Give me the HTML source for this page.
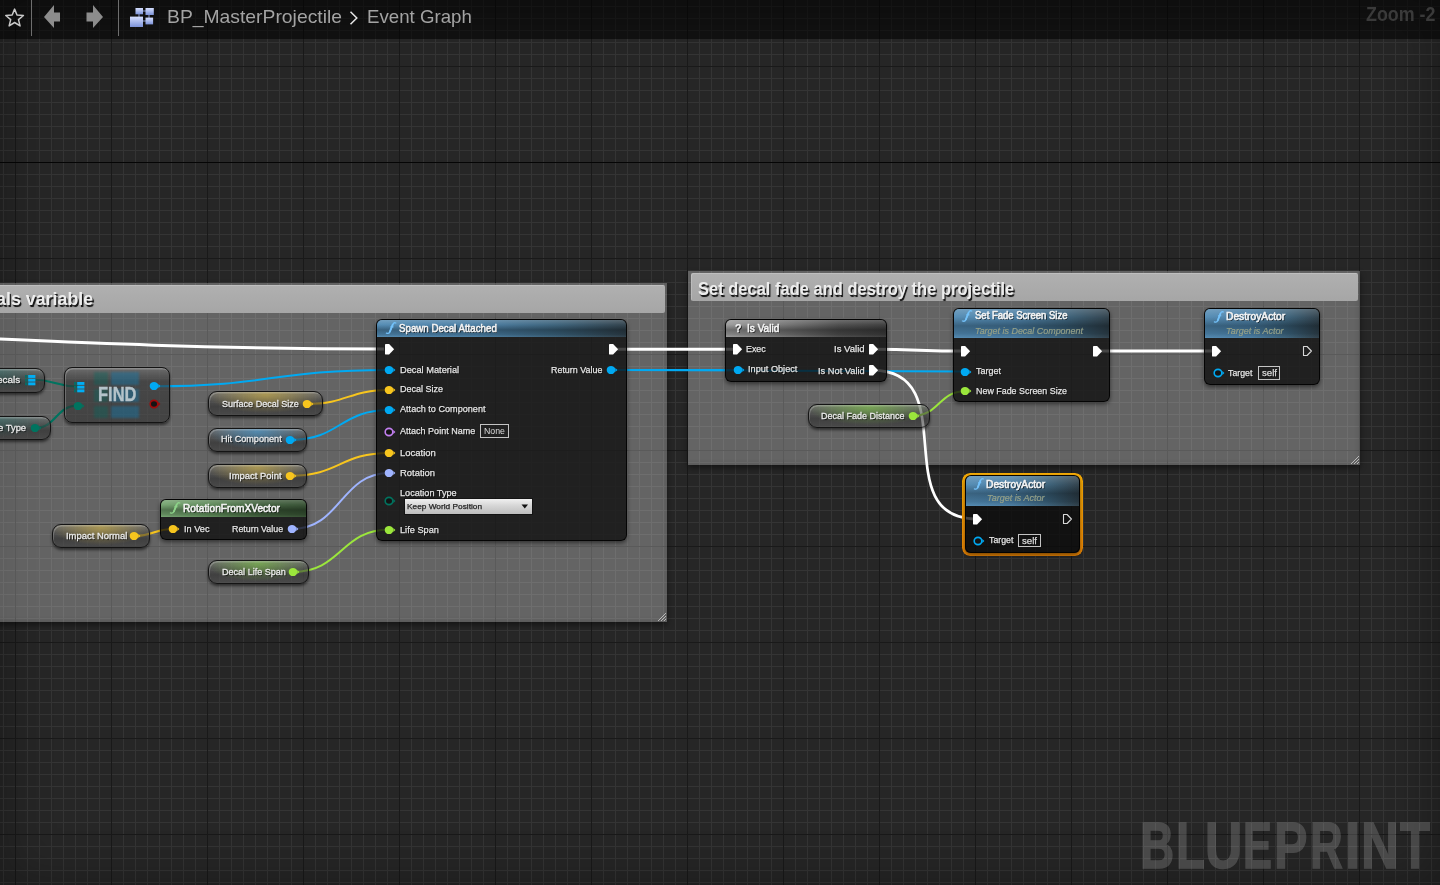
<!DOCTYPE html><html><head><meta charset="utf-8"><style>
*{margin:0;padding:0;box-sizing:border-box}
html,body{width:1440px;height:885px;overflow:hidden;background:#262626}
body{position:relative;font-family:"Liberation Sans",sans-serif}
.t{position:absolute;white-space:nowrap;line-height:1;transform-origin:0 0}
.grid{position:absolute;left:0;top:0;width:1440px;height:885px;
background-color:#262626;
background-image:
 linear-gradient(to bottom, transparent 162px, #050505 162px, #050505 163px, transparent 163px),
 linear-gradient(to right, #191919 1px, transparent 1px),
 linear-gradient(to bottom, #191919 1px, transparent 1px),
 linear-gradient(to right, #343434 1px, transparent 1px),
 linear-gradient(to bottom, #343434 1px, transparent 1px);
background-size: 1440px 885px, 96px 96px, 96px 96px, 12px 12px, 12px 12px;
background-position: 0 0, 15px 0, 0 66px, 3px 0, 0 6px;
}
.vig{position:absolute;left:0;top:0;width:1440px;height:885px;box-shadow:inset 0 0 50px 2px rgba(0,0,0,0.32)}
.cmt{background:rgba(255,255,255,0.285);box-shadow:inset -2px -2px 4px rgba(0,0,0,0.10),0 3px 6px rgba(0,0,0,0.45)}
.cmth{background:linear-gradient(180deg,#b0b0b0 0%,#a6a6a6 100%);border-radius:2px;box-shadow:inset 1px 1px 0 rgba(255,255,255,0.2)}
.ct{text-shadow:1.4px 1.6px 0.8px rgba(0,0,0,0.9)}
.node{border-radius:6px;background:rgba(10,11,10,0.76);border:1px solid rgba(0,0,0,0.85);box-shadow:0 2px 4px rgba(0,0,0,0.5);overflow:hidden}
.hdr{position:absolute;left:0;top:0;right:0}
.fh{background:linear-gradient(180deg,rgba(255,255,255,0.20) 0%,rgba(255,255,255,0.04) 28%,rgba(0,0,0,0.28) 58%,rgba(0,0,0,0.14) 85%,rgba(255,255,255,0.03) 100%),linear-gradient(90deg,#5089b2 0%,#487ca2 40%,#385f78 72%,#2c3d48 100%)}
.gh{background:linear-gradient(180deg,rgba(255,255,255,0.20) 0%,rgba(255,255,255,0.04) 28%,rgba(0,0,0,0.28) 58%,rgba(0,0,0,0.14) 85%,rgba(255,255,255,0.03) 100%),linear-gradient(90deg,#74a36f 0%,#5a8655 35%,#3d5c39 70%,#344f31 100%)}
.vh{background:linear-gradient(180deg,rgba(255,255,255,0.20) 0%,rgba(255,255,255,0.04) 28%,rgba(0,0,0,0.28) 58%,rgba(0,0,0,0.14) 85%,rgba(255,255,255,0.03) 100%),linear-gradient(90deg,#9a9a9a 0%,#7a7a7a 30%,#4a4a4a 70%,#3a3a3a 100%)}
.pill{border-radius:9px;border:1px solid #141414;box-shadow:0 2px 3px rgba(0,0,0,0.5);overflow:hidden}
.pt{text-shadow:1px 1px 1px rgba(0,0,0,0.85);-webkit-text-stroke:0.3px #ececec}
.tt{text-shadow:1px 1px 0.5px rgba(0,0,0,0.7);-webkit-text-stroke:0.6px currentColor}
.lt{text-shadow:1px 1px 0.5px rgba(0,0,0,0.7);-webkit-text-stroke:0.25px currentColor}
</style></head><body>
<div class="grid"></div>
<div class="vig"></div>
<div class="cmt" style="position:absolute;left:-10.00px;top:283.00px;width:677.00px;height:339.00px;"></div>
<div class="cmth" style="position:absolute;left:-10.00px;top:285.00px;width:675.00px;height:27.60px;"></div>
<div class="t ct" style="left:-4.02px;top:290.30px;font-size:18.31px;color:#ededed;font-weight:bold;transform:scaleX(0.9755);">als variable</div>
<div class="cmt" style="position:absolute;left:688.00px;top:271.00px;width:672.00px;height:194.40px;"></div>
<div class="cmth" style="position:absolute;left:691.00px;top:273.00px;width:667.00px;height:28.00px;"></div>
<div class="t ct" style="left:698.42px;top:279.57px;font-size:18.46px;color:#ededed;font-weight:bold;transform:scaleX(0.8947);">Set decal fade and destroy the projectile</div>
<svg style="position:absolute;left:655.00px;top:610.00px;overflow:visible" width="12" height="12"><path d="M11,3 L3,11 M11,6 L6,11 M11,9 L9,11" stroke="#cfcfcf" stroke-width="0.8"/></svg>
<svg style="position:absolute;left:1348.00px;top:453.40px;overflow:visible" width="12" height="12"><path d="M11,3 L3,11 M11,6 L6,11 M11,9 L9,11" stroke="#cfcfcf" stroke-width="0.8"/></svg>
<svg style="position:absolute;left:0.00px;top:0.00px;overflow:visible" width="1440" height="885"><path d="M-300,326 C0,338 150,349 384,349" stroke="#fff" stroke-width="3" fill="none"/><path d="M613.0,349.2 C675.0,349.2 675.0,349.2 737.0,349.2" stroke="#ffffff" stroke-width="3" fill="none"/><path d="M611.0,369.9 C674.2,369.9 674.2,369.9 737.5,369.9" stroke="#00a9f2" stroke-width="2" fill="none"/><path d="M611.0,369.9 C788.0,369.9 788.0,371.5 965.0,371.5" stroke="#00a9f2" stroke-width="2" fill="none"/><path d="M873.0,349.2 C919.0,349.2 919.0,351.1 965.0,351.1" stroke="#ffffff" stroke-width="3" fill="none"/><path d="M1097.0,351.0 C1157.0,351.0 1157.0,351.0 1217.0,351.0" stroke="#ffffff" stroke-width="3" fill="none"/><path d="M873.0,370.4 C965.0,370.4 885.0,519.0 977.0,519.0" stroke="#ffffff" stroke-width="2.7" fill="none"/><path d="M913.1,415.8 C939.0,415.8 939.0,391.3 965.0,391.3" stroke="#9be63c" stroke-width="2" fill="none"/><path d="M154.0,386.2 C271.6,386.2 271.6,370.0 389.3,370.0" stroke="#00a9f2" stroke-width="2" fill="none"/><path d="M307.0,403.8 C348.1,403.8 348.1,390.0 389.3,390.0" stroke="#f7c51e" stroke-width="2" fill="none"/><path d="M290.3,440.0 C339.8,440.0 339.8,410.0 389.3,410.0" stroke="#00a9f2" stroke-width="2" fill="none"/><path d="M290.3,475.8 C339.8,475.8 339.8,453.0 389.3,453.0" stroke="#f7c51e" stroke-width="2" fill="none"/><path d="M292.2,528.9 C340.8,528.9 340.8,473.0 389.3,473.0" stroke="#9fb4ff" stroke-width="2" fill="none"/><path d="M293.1,572.0 C341.2,572.0 341.2,529.6 389.3,529.6" stroke="#9be63c" stroke-width="2" fill="none"/><path d="M134.0,536.0 C154.0,536.0 153.3,528.9 173.3,528.9" stroke="#f7c51e" stroke-width="2" fill="none"/><path d="M32.0,379.5 C55.0,379.5 55.0,386.5 78.0,386.5" stroke="#00735f" stroke-width="2.2" fill="none"/><path d="M35.0,428.0 C56.2,428.0 56.2,405.6 77.5,405.6" stroke="#00735f" stroke-width="2.2" fill="none"/></svg>
<div class="pill" style="position:absolute;left:-60.00px;top:367.75px;width:105.00px;height:25.00px;border-radius:9px;background:radial-gradient(ellipse 52% 80% at 50% 12%, rgba(0,120,110,0.3) 0%, rgba(0,0,0,0) 100%),linear-gradient(180deg,rgba(120,120,120,0.72) 0%,rgba(72,72,72,0.6) 32%,rgba(36,36,36,0.56) 62%,rgba(48,48,48,0.52) 100%);box-shadow:inset 1px 1.5px 0 rgba(255,255,255,0.2),0 2px 3px rgba(0,0,0,0.55)"></div>
<div class="t pt" style="left:-3.42px;top:375.08px;font-size:9.88px;color:#e8e8e8;transform:scaleX(1.0047);">ecals</div>
<svg style="position:absolute;left:25.00px;top:374.75px;overflow:visible" width="12" height="12"><rect x="0" y="0" width="2.6" height="2.9" fill="#0a6a64"/><rect x="0" y="3.7" width="2.6" height="2.9" fill="#0a6a64"/><rect x="0" y="7.4" width="2.6" height="2.9" fill="#0a6a64"/><rect x="3.2" y="0" width="7.2" height="2.9" fill="#00aef5"/><rect x="3.2" y="3.7" width="7.2" height="2.9" fill="#00aef5"/><rect x="3.2" y="7.4" width="7.2" height="2.9" fill="#00aef5"/></svg>
<div class="pill" style="position:absolute;left:-70.00px;top:415.60px;width:121.25px;height:24.40px;border-radius:9px;background:radial-gradient(ellipse 52% 80% at 50% 12%, rgba(0,120,110,0.3) 0%, rgba(0,0,0,0) 100%),linear-gradient(180deg,rgba(120,120,120,0.72) 0%,rgba(72,72,72,0.6) 32%,rgba(36,36,36,0.56) 62%,rgba(48,48,48,0.52) 100%);box-shadow:inset 1px 1.5px 0 rgba(255,255,255,0.2),0 2px 3px rgba(0,0,0,0.55)"></div>
<div class="t pt" style="left:-2.40px;top:422.63px;font-size:9.88px;color:#e8e8e8;transform:scaleX(0.9538);">e Type</div>
<svg style="position:absolute;left:27.00px;top:419.80px;overflow:visible" width="16" height="16"><ellipse cx="8" cy="8" rx="4.3" ry="4.1" fill="#00735f"/><path d="M12.3,6.1 L14.4,8 L12.3,9.9Z" fill="#00735f"/></svg>
<div class="pill" style="position:absolute;left:208.30px;top:391.30px;width:115.20px;height:24.80px;border-radius:9px;background:radial-gradient(ellipse 52% 80% at 50% 12%, rgba(210,180,70,0.6) 0%, rgba(0,0,0,0) 100%),linear-gradient(180deg,rgba(120,120,120,0.72) 0%,rgba(72,72,72,0.6) 32%,rgba(36,36,36,0.56) 62%,rgba(48,48,48,0.52) 100%);box-shadow:inset 1px 1.5px 0 rgba(255,255,255,0.2),0 2px 3px rgba(0,0,0,0.55)"></div>
<div class="t pt" style="left:221.69px;top:398.53px;font-size:9.88px;color:#e8e8e8;transform:scaleX(0.9151);">Surface Decal Size</div>
<svg style="position:absolute;left:299.00px;top:395.70px;overflow:visible" width="16" height="16"><ellipse cx="8" cy="8" rx="4.3" ry="4.1" fill="#f7c51e"/><path d="M12.3,6.1 L14.4,8 L12.3,9.9Z" fill="#f7c51e"/></svg>
<div class="pill" style="position:absolute;left:208.30px;top:427.50px;width:98.40px;height:24.20px;border-radius:9px;background:radial-gradient(ellipse 52% 80% at 50% 12%, rgba(70,160,220,0.6) 0%, rgba(0,0,0,0) 100%),linear-gradient(180deg,rgba(120,120,120,0.72) 0%,rgba(72,72,72,0.6) 32%,rgba(36,36,36,0.56) 62%,rgba(48,48,48,0.52) 100%);box-shadow:inset 1px 1.5px 0 rgba(255,255,255,0.2),0 2px 3px rgba(0,0,0,0.55)"></div>
<div class="t pt" style="left:221.35px;top:434.43px;font-size:9.88px;color:#e8e8e8;transform:scaleX(0.9210);">Hit Component</div>
<svg style="position:absolute;left:282.30px;top:431.60px;overflow:visible" width="16" height="16"><ellipse cx="8" cy="8" rx="4.3" ry="4.1" fill="#00a9f2"/><path d="M12.3,6.1 L14.4,8 L12.3,9.9Z" fill="#00a9f2"/></svg>
<div class="pill" style="position:absolute;left:208.30px;top:463.70px;width:98.40px;height:24.00px;border-radius:9px;background:radial-gradient(ellipse 52% 80% at 50% 12%, rgba(210,180,70,0.6) 0%, rgba(0,0,0,0) 100%),linear-gradient(180deg,rgba(120,120,120,0.72) 0%,rgba(72,72,72,0.6) 32%,rgba(36,36,36,0.56) 62%,rgba(48,48,48,0.52) 100%);box-shadow:inset 1px 1.5px 0 rgba(255,255,255,0.2),0 2px 3px rgba(0,0,0,0.55)"></div>
<div class="t pt" style="left:229.43px;top:470.53px;font-size:9.88px;color:#e8e8e8;transform:scaleX(0.9583);">Impact Point</div>
<svg style="position:absolute;left:282.30px;top:467.70px;overflow:visible" width="16" height="16"><ellipse cx="8" cy="8" rx="4.3" ry="4.1" fill="#f7c51e"/><path d="M12.3,6.1 L14.4,8 L12.3,9.9Z" fill="#f7c51e"/></svg>
<div class="pill" style="position:absolute;left:52.30px;top:523.80px;width:98.00px;height:24.10px;border-radius:9px;background:radial-gradient(ellipse 52% 80% at 50% 12%, rgba(210,180,70,0.6) 0%, rgba(0,0,0,0) 100%),linear-gradient(180deg,rgba(120,120,120,0.72) 0%,rgba(72,72,72,0.6) 32%,rgba(36,36,36,0.56) 62%,rgba(48,48,48,0.52) 100%);box-shadow:inset 1px 1.5px 0 rgba(255,255,255,0.2),0 2px 3px rgba(0,0,0,0.55)"></div>
<div class="t pt" style="left:65.53px;top:530.68px;font-size:9.88px;color:#e8e8e8;transform:scaleX(0.9540);">Impact Normal</div>
<svg style="position:absolute;left:126.00px;top:527.85px;overflow:visible" width="16" height="16"><ellipse cx="8" cy="8" rx="4.3" ry="4.1" fill="#f7c51e"/><path d="M12.3,6.1 L14.4,8 L12.3,9.9Z" fill="#f7c51e"/></svg>
<div class="pill" style="position:absolute;left:208.40px;top:559.70px;width:100.80px;height:24.30px;border-radius:9px;background:radial-gradient(ellipse 52% 80% at 50% 12%, rgba(130,210,70,0.55) 0%, rgba(0,0,0,0) 100%),linear-gradient(180deg,rgba(120,120,120,0.72) 0%,rgba(72,72,72,0.6) 32%,rgba(36,36,36,0.56) 62%,rgba(48,48,48,0.52) 100%);box-shadow:inset 1px 1.5px 0 rgba(255,255,255,0.2),0 2px 3px rgba(0,0,0,0.55)"></div>
<div class="t pt" style="left:221.56px;top:566.68px;font-size:9.88px;color:#e8e8e8;transform:scaleX(0.9162);">Decal Life Span</div>
<svg style="position:absolute;left:285.10px;top:563.85px;overflow:visible" width="16" height="16"><ellipse cx="8" cy="8" rx="4.3" ry="4.1" fill="#9be63c"/><path d="M12.3,6.1 L14.4,8 L12.3,9.9Z" fill="#9be63c"/></svg>
<div class="pill" style="position:absolute;left:808.30px;top:403.75px;width:121.50px;height:23.95px;border-radius:9px;background:radial-gradient(ellipse 52% 80% at 50% 12%, rgba(130,210,70,0.55) 0%, rgba(0,0,0,0) 100%),linear-gradient(180deg,rgba(120,120,120,0.72) 0%,rgba(72,72,72,0.6) 32%,rgba(36,36,36,0.56) 62%,rgba(48,48,48,0.52) 100%);box-shadow:inset 1px 1.5px 0 rgba(255,255,255,0.2),0 2px 3px rgba(0,0,0,0.55)"></div>
<div class="t pt" style="left:821.26px;top:410.56px;font-size:9.88px;color:#e8e8e8;transform:scaleX(0.9106);">Decal Fade Distance</div>
<svg style="position:absolute;left:905.10px;top:407.73px;overflow:visible" width="16" height="16"><ellipse cx="8" cy="8" rx="4.3" ry="4.1" fill="#9be63c"/><path d="M12.3,6.1 L14.4,8 L12.3,9.9Z" fill="#9be63c"/></svg>
<div class="pill" style="position:absolute;left:64.40px;top:367.20px;width:105.20px;height:56.10px;border-radius:8px;background:linear-gradient(180deg,rgba(110,110,110,0.75) 0%,rgba(50,50,50,0.6) 25%,rgba(40,40,40,0.55) 100%);box-shadow:inset 1px 1.5px 0 rgba(255,255,255,0.22),0 2px 3px rgba(0,0,0,0.55)"></div>
<div style="position:absolute;left:94.00px;top:372.00px;width:13.50px;height:46.00px;background:repeating-linear-gradient(180deg,rgba(0,110,100,0.35) 0 13px,transparent 13px 17px);filter:blur(1.2px)"></div>
<div style="position:absolute;left:110.60px;top:372.00px;width:28.80px;height:46.00px;background:repeating-linear-gradient(180deg,rgba(20,120,170,0.45) 0 13px,transparent 13px 17px);filter:blur(1.2px)"></div>
<div class="t" style="left:97.80px;top:384.33px;font-size:20.64px;color:#b4c3ca;font-weight:bold;transform:scaleX(0.7995);-webkit-text-stroke:0.35px currentColor">FIND</div>
<svg style="position:absolute;left:73.75px;top:381.90px;overflow:visible" width="12" height="12"><rect x="0" y="0" width="2.6" height="2.9" fill="#0a6a64"/><rect x="0" y="3.7" width="2.6" height="2.9" fill="#0a6a64"/><rect x="0" y="7.4" width="2.6" height="2.9" fill="#0a6a64"/><rect x="3.2" y="0" width="7.2" height="2.9" fill="#00aef5"/><rect x="3.2" y="3.7" width="7.2" height="2.9" fill="#00aef5"/><rect x="3.2" y="7.4" width="7.2" height="2.9" fill="#00aef5"/></svg>
<svg style="position:absolute;left:69.50px;top:397.60px;overflow:visible" width="16" height="16"><ellipse cx="8" cy="8" rx="4.3" ry="4.1" fill="#00735f"/><path d="M12.3,6.1 L14.4,8 L12.3,9.9Z" fill="#00735f"/></svg>
<svg style="position:absolute;left:146.00px;top:378.25px;overflow:visible" width="16" height="16"><ellipse cx="8" cy="8" rx="4.3" ry="4.1" fill="#00a9f2"/><path d="M12.3,6.1 L14.4,8 L12.3,9.9Z" fill="#00a9f2"/></svg>
<svg style="position:absolute;left:146.00px;top:395.75px;overflow:visible" width="16" height="16"><ellipse cx="8" cy="8" rx="3.8000000000000003" ry="3.6" fill="#141414" stroke="#a00a0a" stroke-width="1.6"/><path d="M12.3,6.1 L14.4,8 L12.3,9.9Z" fill="#a00a0a"/></svg>
<div class="node" style="position:absolute;left:376.10px;top:319.00px;width:250.50px;height:222.30px;"><div class="hdr fh" style="height:17.00px"></div></div>
<svg style="position:absolute;left:386.00px;top:322.00px;overflow:visible" width="10" height="12"><g transform="scale(1.000,1.000)"><path d="M9.8,1.0 C8.6,0.5 7.4,0.8 6.8,2.4 L3.8,10.0 C3.2,11.5 1.9,11.7 0.4,11.2" fill="none" stroke="#74c2fa" stroke-width="1.3" stroke-linecap="round"/><path d="M6.9,2.2 L3.7,10.2" stroke="#74c2fa" stroke-width="1.8"/><path d="M4.2,4.9 L7.6,4.9" stroke="#74c2fa" stroke-width="1.0"/></g></svg>
<div class="t tt" style="left:398.56px;top:322.26px;font-size:11.63px;color:#f4f4f4;transform:scaleX(0.8362);">Spawn Decal Attached</div>
<svg style="position:absolute;left:383.80px;top:343.00px;overflow:visible" width="12" height="13"><path d="M1.4,1 L5.1,1 L10.1,6.2 L5.1,11.4 L1.4,11.4 Q1,11.4 1,11 L1,1.4 Q1,1 1.4,1Z" fill="#fff"/></svg>
<svg style="position:absolute;left:607.90px;top:343.00px;overflow:visible" width="12" height="13"><path d="M1.4,1 L5.1,1 L10.1,6.2 L5.1,11.4 L1.4,11.4 Q1,11.4 1,11 L1,1.4 Q1,1 1.4,1Z" fill="#fff"/></svg>
<svg style="position:absolute;left:381.40px;top:362.00px;overflow:visible" width="16" height="16"><ellipse cx="8" cy="8" rx="4.3" ry="4.1" fill="#00a9f2"/><path d="M12.3,6.1 L14.4,8 L12.3,9.9Z" fill="#00a9f2"/></svg>
<div class="t lt" style="left:399.54px;top:364.73px;font-size:9.88px;color:#e6e6e6;transform:scaleX(0.9369);">Decal Material</div>
<svg style="position:absolute;left:381.40px;top:382.10px;overflow:visible" width="16" height="16"><ellipse cx="8" cy="8" rx="4.3" ry="4.1" fill="#f7c51e"/><path d="M12.3,6.1 L14.4,8 L12.3,9.9Z" fill="#f7c51e"/></svg>
<div class="t lt" style="left:399.56px;top:384.33px;font-size:9.88px;color:#e6e6e6;transform:scaleX(0.9110);">Decal Size</div>
<svg style="position:absolute;left:381.40px;top:402.00px;overflow:visible" width="16" height="16"><ellipse cx="8" cy="8" rx="4.3" ry="4.1" fill="#00a9f2"/><path d="M12.3,6.1 L14.4,8 L12.3,9.9Z" fill="#00a9f2"/></svg>
<div class="t lt" style="left:400.28px;top:404.03px;font-size:9.88px;color:#e6e6e6;transform:scaleX(0.9217);">Attach to Component</div>
<svg style="position:absolute;left:381.40px;top:423.60px;overflow:visible" width="16" height="16"><ellipse cx="8" cy="8" rx="3.8000000000000003" ry="3.6" fill="#141414" stroke="#c27ff0" stroke-width="1.6"/><path d="M12.3,6.1 L14.4,8 L12.3,9.9Z" fill="#c27ff0"/></svg>
<div class="t lt" style="left:400.28px;top:426.13px;font-size:9.88px;color:#e6e6e6;transform:scaleX(0.9140);">Attach Point Name</div>
<svg style="position:absolute;left:381.40px;top:445.10px;overflow:visible" width="16" height="16"><ellipse cx="8" cy="8" rx="4.3" ry="4.1" fill="#f7c51e"/><path d="M12.3,6.1 L14.4,8 L12.3,9.9Z" fill="#f7c51e"/></svg>
<div class="t lt" style="left:399.52px;top:447.63px;font-size:9.88px;color:#e6e6e6;transform:scaleX(0.9606);">Location</div>
<svg style="position:absolute;left:381.40px;top:464.80px;overflow:visible" width="16" height="16"><ellipse cx="8" cy="8" rx="4.3" ry="4.1" fill="#9fb4ff"/><path d="M12.3,6.1 L14.4,8 L12.3,9.9Z" fill="#9fb4ff"/></svg>
<div class="t lt" style="left:399.53px;top:467.53px;font-size:9.88px;color:#e6e6e6;transform:scaleX(0.9530);">Rotation</div>
<svg style="position:absolute;left:381.40px;top:521.60px;overflow:visible" width="16" height="16"><ellipse cx="8" cy="8" rx="4.3" ry="4.1" fill="#9be63c"/><path d="M12.3,6.1 L14.4,8 L12.3,9.9Z" fill="#9be63c"/></svg>
<div class="t lt" style="left:399.54px;top:524.53px;font-size:9.88px;color:#e6e6e6;transform:scaleX(0.9327);">Life Span</div>
<svg style="position:absolute;left:381.40px;top:493.00px;overflow:visible" width="16" height="16"><ellipse cx="8" cy="8" rx="3.8000000000000003" ry="3.6" fill="#141414" stroke="#00735f" stroke-width="1.6"/><path d="M12.3,6.1 L14.4,8 L12.3,9.9Z" fill="#00735f"/></svg>
<div class="t lt" style="left:399.65px;top:487.53px;font-size:9.88px;color:#e6e6e6;transform:scaleX(0.9238);">Location Type</div>
<div style="position:absolute;left:479.90px;top:424.00px;width:28.90px;height:13.70px;border:1px solid #c4c4c4"></div>
<div class="t" style="left:483.68px;top:426.18px;font-size:9.59px;color:#dcdcdc;transform:scaleX(0.9162);">None</div>
<div style="position:absolute;left:404.90px;top:499.00px;width:127.30px;height:15.00px;background:linear-gradient(180deg,#f0f0f0 0%,#d6d6d6 45%,#bdbdbd 100%);box-shadow:0 0 0 1px rgba(0,0,0,0.4)"></div>
<div class="t" style="left:407.32px;top:502.63px;font-size:7.41px;color:#262626;transform:scaleX(1.1200);-webkit-text-stroke:0.25px #262626">Keep World Position</div>
<svg style="position:absolute;left:521.00px;top:504.00px;overflow:visible" width="8" height="6"><path d="M0.5,0.5 L7,0.5 L3.75,4.5Z" fill="#111"/></svg>
<div class="t lt" style="left:550.52px;top:364.63px;font-size:9.88px;color:#e6e6e6;transform:scaleX(0.9027);">Return Value</div>
<svg style="position:absolute;left:603.00px;top:361.90px;overflow:visible" width="16" height="16"><ellipse cx="8" cy="8" rx="4.3" ry="4.1" fill="#00a9f2"/><path d="M12.3,6.1 L14.4,8 L12.3,9.9Z" fill="#00a9f2"/></svg>
<div class="node" style="position:absolute;left:160.30px;top:499.40px;width:147.10px;height:40.90px;"><div class="hdr gh" style="height:16.60px"></div></div>
<svg style="position:absolute;left:170.00px;top:502.20px;overflow:visible" width="10" height="11.7"><g transform="scale(1.000,0.975)"><path d="M9.8,1.0 C8.6,0.5 7.4,0.8 6.8,2.4 L3.8,10.0 C3.2,11.5 1.9,11.7 0.4,11.2" fill="none" stroke="#8ed48a" stroke-width="1.3" stroke-linecap="round"/><path d="M6.9,2.2 L3.7,10.2" stroke="#8ed48a" stroke-width="1.8"/><path d="M4.2,4.9 L7.6,4.9" stroke="#8ed48a" stroke-width="1.0"/></g></svg>
<div class="t tt" style="left:182.87px;top:502.68px;font-size:11.48px;color:#f4f4f4;transform:scaleX(0.8841);">RotationFromXVector</div>
<svg style="position:absolute;left:165.30px;top:520.90px;overflow:visible" width="16" height="16"><ellipse cx="8" cy="8" rx="4.3" ry="4.1" fill="#f7c51e"/><path d="M12.3,6.1 L14.4,8 L12.3,9.9Z" fill="#f7c51e"/></svg>
<div class="t lt" style="left:183.55px;top:523.53px;font-size:9.88px;color:#e6e6e6;transform:scaleX(0.9312);">In Vec</div>
<div class="t lt" style="left:231.87px;top:523.53px;font-size:9.88px;color:#e6e6e6;transform:scaleX(0.8983);">Return Value</div>
<svg style="position:absolute;left:284.20px;top:520.90px;overflow:visible" width="16" height="16"><ellipse cx="8" cy="8" rx="4.3" ry="4.1" fill="#9fb4ff"/><path d="M12.3,6.1 L14.4,8 L12.3,9.9Z" fill="#9fb4ff"/></svg>
<div class="node" style="position:absolute;left:725.00px;top:319.40px;width:161.60px;height:62.80px;"><div class="hdr vh" style="height:16.50px"></div></div>
<div class="t lt" style="left:734.61px;top:322.53px;font-size:11.19px;color:#f2f2f2;font-weight:bold;transform:scaleX(0.9511);">?</div>
<div class="t tt" style="left:746.87px;top:322.73px;font-size:11.19px;color:#f4f4f4;transform:scaleX(0.9014);">Is Valid</div>
<svg style="position:absolute;left:732.00px;top:343.00px;overflow:visible" width="12" height="13"><path d="M1.4,1 L5.1,1 L10.1,6.2 L5.1,11.4 L1.4,11.4 Q1,11.4 1,11 L1,1.4 Q1,1 1.4,1Z" fill="#fff"/></svg>
<div class="t lt" style="left:745.77px;top:344.46px;font-size:9.74px;color:#e6e6e6;transform:scaleX(0.9129);">Exec</div>
<div class="t lt" style="left:834.32px;top:344.46px;font-size:9.74px;color:#e6e6e6;transform:scaleX(0.9800);">Is Valid</div>
<svg style="position:absolute;left:867.90px;top:343.00px;overflow:visible" width="12" height="13"><path d="M1.4,1 L5.1,1 L10.1,6.2 L5.1,11.4 L1.4,11.4 Q1,11.4 1,11 L1,1.4 Q1,1 1.4,1Z" fill="#fff"/></svg>
<svg style="position:absolute;left:729.50px;top:362.10px;overflow:visible" width="16" height="16"><ellipse cx="8" cy="8" rx="4.3" ry="4.1" fill="#00a9f2"/><path d="M12.3,6.1 L14.4,8 L12.3,9.9Z" fill="#00a9f2"/></svg>
<div class="t lt" style="left:747.65px;top:364.43px;font-size:9.88px;color:#e6e6e6;transform:scaleX(0.9272);">Input Object</div>
<div class="t lt" style="left:818.14px;top:365.53px;font-size:9.88px;color:#e6e6e6;transform:scaleX(0.9390);">Is Not Valid</div>
<svg style="position:absolute;left:867.90px;top:364.00px;overflow:visible" width="12" height="13"><path d="M1.4,1 L5.1,1 L10.1,6.2 L5.1,11.4 L1.4,11.4 Q1,11.4 1,11 L1,1.4 Q1,1 1.4,1Z" fill="#fff"/></svg>
<div class="node" style="position:absolute;left:952.50px;top:307.50px;width:157.70px;height:94.60px;"><div class="hdr fh" style="height:29.40px"></div></div>
<svg style="position:absolute;left:961.80px;top:310.20px;overflow:visible" width="9.9" height="11.8"><g transform="scale(0.990,0.983)"><path d="M9.8,1.0 C8.6,0.5 7.4,0.8 6.8,2.4 L3.8,10.0 C3.2,11.5 1.9,11.7 0.4,11.2" fill="none" stroke="#74c2fa" stroke-width="1.3" stroke-linecap="round"/><path d="M6.9,2.2 L3.7,10.2" stroke="#74c2fa" stroke-width="1.8"/><path d="M4.2,4.9 L7.6,4.9" stroke="#74c2fa" stroke-width="1.0"/></g></svg>
<div class="t tt" style="left:974.97px;top:310.84px;font-size:10.47px;color:#f4f4f4;transform:scaleX(0.9082);">Set Fade Screen Size</div>
<div class="t" style="left:974.60px;top:325.53px;font-size:9.88px;color:#95a189;font-style:italic;transform:scaleX(0.9051);-webkit-text-stroke:0.2px currentColor">Target is Decal Component</div>
<svg style="position:absolute;left:959.50px;top:345.00px;overflow:visible" width="12" height="13"><path d="M1.4,1 L5.1,1 L10.1,6.2 L5.1,11.4 L1.4,11.4 Q1,11.4 1,11 L1,1.4 Q1,1 1.4,1Z" fill="#fff"/></svg>
<svg style="position:absolute;left:1091.80px;top:345.00px;overflow:visible" width="12" height="13"><path d="M1.4,1 L5.1,1 L10.1,6.2 L5.1,11.4 L1.4,11.4 Q1,11.4 1,11 L1,1.4 Q1,1 1.4,1Z" fill="#fff"/></svg>
<svg style="position:absolute;left:957.00px;top:363.50px;overflow:visible" width="16" height="16"><ellipse cx="8" cy="8" rx="4.3" ry="4.1" fill="#00a9f2"/><path d="M12.3,6.1 L14.4,8 L12.3,9.9Z" fill="#00a9f2"/></svg>
<div class="t lt" style="left:976.10px;top:366.43px;font-size:9.88px;color:#e6e6e6;transform:scaleX(0.9091);">Target</div>
<svg style="position:absolute;left:957.00px;top:383.30px;overflow:visible" width="16" height="16"><ellipse cx="8" cy="8" rx="4.3" ry="4.1" fill="#9be63c"/><path d="M12.3,6.1 L14.4,8 L12.3,9.9Z" fill="#9be63c"/></svg>
<div class="t lt" style="left:975.57px;top:386.23px;font-size:9.88px;color:#e6e6e6;transform:scaleX(0.9015);">New Fade Screen Size</div>
<div class="node" style="position:absolute;left:1204.30px;top:307.80px;width:115.90px;height:77.40px;"><div class="hdr fh" style="height:29.60px"></div></div>
<svg style="position:absolute;left:1213.50px;top:310.80px;overflow:visible" width="9.6" height="11.6"><g transform="scale(0.960,0.967)"><path d="M9.8,1.0 C8.6,0.5 7.4,0.8 6.8,2.4 L3.8,10.0 C3.2,11.5 1.9,11.7 0.4,11.2" fill="none" stroke="#74c2fa" stroke-width="1.3" stroke-linecap="round"/><path d="M6.9,2.2 L3.7,10.2" stroke="#74c2fa" stroke-width="1.8"/><path d="M4.2,4.9 L7.6,4.9" stroke="#74c2fa" stroke-width="1.0"/></g></svg>
<div class="t tt" style="left:1225.66px;top:311.35px;font-size:11.05px;color:#f4f4f4;transform:scaleX(0.9275);">DestroyActor</div>
<div class="t" style="left:1226.29px;top:326.73px;font-size:9.30px;color:#95a189;font-style:italic;transform:scaleX(0.9706);-webkit-text-stroke:0.2px currentColor">Target is Actor</div>
<svg style="position:absolute;left:1211.30px;top:345.30px;overflow:visible" width="12" height="13"><path d="M1.4,1 L5.1,1 L10.1,6.2 L5.1,11.4 L1.4,11.4 Q1,11.4 1,11 L1,1.4 Q1,1 1.4,1Z" fill="#fff"/></svg>
<svg style="position:absolute;left:1302.20px;top:345.30px;overflow:visible" width="12" height="13"><path d="M1.5,1.5 L5.1,1.5 L9.4,6 L5.1,10.5 L1.5,10.5 Z" fill="none" stroke="#d8d8d8" stroke-width="1.1" stroke-linejoin="round"/></svg>
<svg style="position:absolute;left:1209.50px;top:365.40px;overflow:visible" width="16" height="16"><ellipse cx="8" cy="8" rx="3.8000000000000003" ry="3.6" fill="#141414" stroke="#00a9f2" stroke-width="1.6"/><path d="M12.3,6.1 L14.4,8 L12.3,9.9Z" fill="#00a9f2"/></svg>
<div class="t lt" style="left:1228.00px;top:367.88px;font-size:9.59px;color:#e6e6e6;transform:scaleX(0.9147);">Target</div>
<div style="position:absolute;left:1257.70px;top:366.30px;width:22.80px;height:13.70px;border:1px solid #c4c4c4"></div>
<div class="t lt" style="left:1261.63px;top:368.00px;font-size:9.45px;color:#dcdcdc;transform:scaleX(1.0240);">self</div>
<div style="position:absolute;left:962.00px;top:472.70px;width:120.90px;height:83.60px;border-radius:8px;padding:3px;background:linear-gradient(180deg,#f8ad06 0%,#e98404 100%);-webkit-mask:linear-gradient(#000 0 0) content-box,linear-gradient(#000 0 0);-webkit-mask-composite:xor;mask-composite:exclude"></div>
<div class="node" style="position:absolute;left:965.00px;top:475.30px;width:114.90px;height:77.40px;"><div class="hdr fh" style="height:29.60px"></div></div>
<svg style="position:absolute;left:974.20px;top:478.30px;overflow:visible" width="9.6" height="11.6"><g transform="scale(0.960,0.967)"><path d="M9.8,1.0 C8.6,0.5 7.4,0.8 6.8,2.4 L3.8,10.0 C3.2,11.5 1.9,11.7 0.4,11.2" fill="none" stroke="#74c2fa" stroke-width="1.3" stroke-linecap="round"/><path d="M6.9,2.2 L3.7,10.2" stroke="#74c2fa" stroke-width="1.8"/><path d="M4.2,4.9 L7.6,4.9" stroke="#74c2fa" stroke-width="1.0"/></g></svg>
<div class="t tt" style="left:986.36px;top:478.85px;font-size:11.05px;color:#f4f4f4;transform:scaleX(0.9275);">DestroyActor</div>
<div class="t" style="left:986.99px;top:494.23px;font-size:9.30px;color:#95a189;font-style:italic;transform:scaleX(0.9706);-webkit-text-stroke:0.2px currentColor">Target is Actor</div>
<svg style="position:absolute;left:972.00px;top:512.80px;overflow:visible" width="12" height="13"><path d="M1.4,1 L5.1,1 L10.1,6.2 L5.1,11.4 L1.4,11.4 Q1,11.4 1,11 L1,1.4 Q1,1 1.4,1Z" fill="#fff"/></svg>
<svg style="position:absolute;left:1061.90px;top:512.80px;overflow:visible" width="12" height="13"><path d="M1.5,1.5 L5.1,1.5 L9.4,6 L5.1,10.5 L1.5,10.5 Z" fill="none" stroke="#d8d8d8" stroke-width="1.1" stroke-linejoin="round"/></svg>
<svg style="position:absolute;left:970.20px;top:532.90px;overflow:visible" width="16" height="16"><ellipse cx="8" cy="8" rx="3.8000000000000003" ry="3.6" fill="#141414" stroke="#00a9f2" stroke-width="1.6"/><path d="M12.3,6.1 L14.4,8 L12.3,9.9Z" fill="#00a9f2"/></svg>
<div class="t lt" style="left:988.70px;top:535.38px;font-size:9.59px;color:#e6e6e6;transform:scaleX(0.9147);">Target</div>
<div style="position:absolute;left:1018.40px;top:533.80px;width:22.80px;height:13.70px;border:1px solid #c4c4c4"></div>
<div class="t lt" style="left:1022.33px;top:535.50px;font-size:9.45px;color:#dcdcdc;transform:scaleX(1.0240);">self</div>
<div style="position:absolute;left:0.00px;top:0.00px;width:1440.00px;height:39.00px;background:rgba(0,0,0,0.55)"></div>
<svg style="position:absolute;left:0.00px;top:0.00px;overflow:visible" width="30" height="30"><path d="M14.60,9.10 L17.01,15.08 L23.44,15.53 L18.50,19.67 L20.07,25.92 L14.60,22.50 L9.13,25.92 L10.70,19.67 L5.76,15.53 L12.19,15.08 Z" fill="none" stroke="#c8c8c8" stroke-width="1.5" stroke-linejoin="round"/></svg>
<div style="position:absolute;left:31.00px;top:0.00px;width:1.00px;height:35.50px;background:#6e6e6e"></div>
<div style="position:absolute;left:118.00px;top:0.00px;width:1.00px;height:35.50px;background:#6e6e6e"></div>
<svg style="position:absolute;left:43.00px;top:4.00px;overflow:visible" width="20" height="26"><path d="M1,13 L11,1 L11,8.5 L17,8.5 L17,17.5 L11,17.5 L11,24 Z" fill="#8c8c8c"/></svg>
<svg style="position:absolute;left:85.00px;top:4.00px;overflow:visible" width="20" height="26"><path d="M18,13 L8,1 L8,8.5 L1.5,8.5 L1.5,17.5 L8,17.5 L8,24 Z" fill="#8c8c8c"/></svg>
<svg style="position:absolute;left:129.00px;top:7.00px;overflow:visible" width="26" height="21"><defs><linearGradient id="bpg" x1="0" y1="0" x2="0" y2="1"><stop offset="0" stop-color="#d6e0ff"/><stop offset="1" stop-color="#7c92d8"/></linearGradient></defs><path d="M10,4 L20,4 M20,4 L20,14 M13,14 L20,14 M10,7 L10,11" stroke="#8a9ad0" stroke-width="1"/><rect x="6.5" y="1" width="7.5" height="6.3" fill="url(#bpg)"/><rect x="16.5" y="1" width="8.3" height="7" fill="url(#bpg)"/><rect x="1" y="9.6" width="13" height="10.4" fill="url(#bpg)"/><rect x="16.5" y="10.6" width="7.6" height="6.8" fill="url(#bpg)"/></svg>
<div class="t" style="left:166.81px;top:7.80px;font-size:18.31px;color:#a3a3a3;transform:scaleX(1.0557);">BP_MasterProjectile</div>
<svg style="position:absolute;left:348.00px;top:10.00px;overflow:visible" width="12" height="16"><path d="M2.5,1.8 L8.8,8 L2.5,14.2" fill="none" stroke="#e6e6e6" stroke-width="1.5"/></svg>
<div class="t" style="left:367.37px;top:7.80px;font-size:18.31px;color:#a3a3a3;transform:scaleX(1.0207);">Event Graph</div>
<div class="t" style="left:1366.17px;top:4.23px;font-size:20.64px;color:#3a3a3a;font-weight:bold;transform:scaleX(0.8665);">Zoom -2</div>
<div style="position:absolute;left:0;top:0;width:1440px;height:885px;opacity:0.17">
<div class="t" style="left:1139.53px;top:813.18px;font-size:65.12px;color:#fff;font-weight:bold;transform:scaleX(0.7277);-webkit-text-stroke:1.4px #fff">B</div>
<div class="t" style="left:1176.33px;top:813.18px;font-size:65.12px;color:#fff;font-weight:bold;transform:scaleX(0.7272);-webkit-text-stroke:1.4px #fff">L</div>
<div class="t" style="left:1204.62px;top:813.18px;font-size:65.12px;color:#fff;font-weight:bold;transform:scaleX(0.7869);-webkit-text-stroke:1.4px #fff">U</div>
<div class="t" style="left:1243.10px;top:813.18px;font-size:65.12px;color:#fff;font-weight:bold;transform:scaleX(0.6652);-webkit-text-stroke:1.4px #fff">E</div>
<div class="t" style="left:1273.74px;top:813.18px;font-size:65.12px;color:#fff;font-weight:bold;transform:scaleX(0.7707);-webkit-text-stroke:1.4px #fff">P</div>
<div class="t" style="left:1310.36px;top:813.18px;font-size:65.12px;color:#fff;font-weight:bold;transform:scaleX(0.6968);-webkit-text-stroke:1.4px #fff">R</div>
<div class="t" style="left:1344.58px;top:813.18px;font-size:65.12px;color:#fff;font-weight:bold;transform:scaleX(0.8529);-webkit-text-stroke:1.4px #fff">I</div>
<div class="t" style="left:1361.48px;top:813.18px;font-size:65.12px;color:#fff;font-weight:bold;transform:scaleX(0.8072);-webkit-text-stroke:1.4px #fff">N</div>
<div class="t" style="left:1400.15px;top:813.18px;font-size:65.12px;color:#fff;font-weight:bold;transform:scaleX(0.7537);-webkit-text-stroke:1.4px #fff">T</div>
</div>
</body></html>
